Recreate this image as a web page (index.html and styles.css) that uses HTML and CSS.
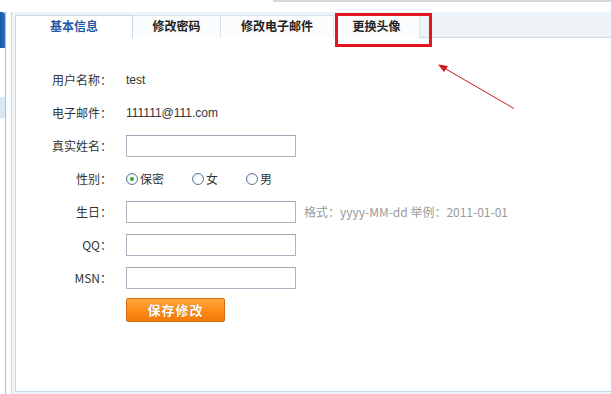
FILE: index.html
```html
<!DOCTYPE html>
<html lang="zh-CN">
<head>
<meta charset="utf-8">
<title>基本信息</title>
<link rel="stylesheet" href="styles.css">
</head>
<body>
<div class="topline"></div>
<div class="wrap">
  <div class="side">
    <div class="side-blue"></div>
    <div class="side-light"></div>
  </div>
  <div class="gapcol"></div>
  <div class="main">
    <div class="panel">
      <div class="tabs">
        <div class="tab active t1">基本信息</div>
        <div class="tab t2">修改密码</div>
        <div class="tab t3">修改电子邮件</div>
        <div class="tab t4">更换头像</div>
      </div>
      <div class="form">
        <div class="row"><span class="label">用户名称：</span><span class="val">test</span></div>
        <div class="row"><span class="label">电子邮件：</span><span class="val">111111@111.com</span></div>
        <div class="row"><span class="label">真实姓名：</span><span class="input"></span></div>
        <div class="row"><span class="label">性别：</span>
          <span class="radios">
            <span class="radio-item r1"><span class="radio on"></span>保密</span>
            <span class="radio-item r2"><span class="radio"></span>女</span>
            <span class="radio-item r3"><span class="radio"></span>男</span>
          </span>
        </div>
        <div class="row"><span class="label">生日：</span><span class="input"></span><span class="hint">格式：yyyy-MM-dd 举例：2011-01-01</span></div>
        <div class="row"><span class="label">QQ：</span><span class="input"></span></div>
        <div class="row"><span class="label">MSN：</span><span class="input"></span></div>
        <div class="btnrow"><span class="btn">保存修改</span></div>
      </div>
    </div>
  </div>
</div>
<div class="redbox"></div>
<svg class="arrow" width="611" height="394" viewBox="0 0 611 394">
  <line x1="514" y1="108.5" x2="445" y2="68.5" stroke="#c81d1d" stroke-width="1"/>
  <polygon points="438,64.5 448,66 444,72" fill="#d01818"/>
</svg>
</body>
</html>
```

FILE: styles.css
```css
html, body {
  margin: 0;
  padding: 0;
  background: #fff;
}
body {
  width: 611px;
  height: 394px;
  overflow: hidden;
  position: relative;
  font-family: "Liberation Sans", "Noto Sans CJK SC", sans-serif;
  font-size: 12px;
  color: #333;
}
.topline {
  height: 2px;
  margin-left: 273px;
  background: #d4d8dc;
  margin-bottom: 10px;
}
.wrap {
  display: flex;
  height: 382px;
}
.side {
  width: 5px;
  border-right: 1px solid #a8c3d8;
  display: flex;
  flex-direction: column;
}
.side-blue {
  height: 36px;
  background: linear-gradient(to right, #1a55a8, #2f70c4);
  border-top-right-radius: 3px;
}
.side-light {
  height: 21px;
  margin-top: 49px;
  background: #d9e6f4;
}
.gapcol {
  width: 5px;
  background: #fbfcfd;
}
.main {
  flex: 1;
  border-left: 1px solid #c9dcec;
  background: #eef3f8;
  padding-left: 3px;
}
.panel {
  height: 379px;
  background: #fff;
  border-left: 1px solid #c6d8e8;
  border-bottom: 1px solid #c6d8e8;
}
.tabs {
  display: flex;
  height: 25px;
  padding-top: 0;
  background: #eef3f8;
  border-bottom: 1px solid #cbdbe8;
  margin-left: -1px;
  align-items: flex-end;
}
.tab {
  height: 22px;
  line-height: 22px;
  text-align: center;
  font-weight: bold;
  font-size: 12px;
  color: #222;
  background: #fbfcfd;
  border-right: 1px solid #d8e3ec;
  border-top: 1px solid #d8e3ec;
  margin-bottom: -1px;
  box-sizing: border-box;
  height: 23px;
}
.tab.active {
  background: #fff;
  color: #2557a7;
  border-left: 1px solid #c6d8e8;
  border-top: 1px solid #c6d8e8;
  border-right: 1px solid #c6d8e8;
}
.t1 { width: 118px; }
.t2 { width: 88px; }
.t3 { width: 113px; }
.t4 { width: 86px; }
.form {
  padding-top: 25px;
}
.row {
  display: flex;
  align-items: center;
  height: 33px;
}
.label {
  width: 96px;
  text-align: right;
  margin-right: 14px;
  font-family: "Noto Sans CJK SC", sans-serif;
  color: #333;
}
.val {
  font-family: "Liberation Sans", "Noto Sans CJK SC", sans-serif;
  color: #333;
}
.input {
  width: 170px;
  height: 22px;
  box-sizing: border-box;
  border: 1px solid #a9b5c1;
  border-top-color: #9aa6b3;
  background: #fff;
}
.hint {
  margin-left: 8px;
  color: #9a9a9a;
  font-family: "Noto Sans CJK SC", sans-serif;
}
.radios {
  display: flex;
  align-items: center;
  font-family: "Noto Sans CJK SC", sans-serif;
}
.radio-item {
  display: flex;
  align-items: center;
}
.r1 { width: 66px; }
.r2 { width: 54px; }
.radio {
  width: 12px;
  height: 12px;
  box-sizing: border-box;
  border: 1px solid #5d7a96;
  border-radius: 50%;
  background: radial-gradient(circle at 60% 60%, #ffffff 30%, #dfe3e8 100%);
  margin-right: 2px;
  position: relative;
}
.radio.on::after {
  content: "";
  position: absolute;
  left: 3px;
  top: 3px;
  width: 4px;
  height: 4px;
  border-radius: 50%;
  background: #2fa52f;
}
.btnrow {
  padding-left: 110px;
  margin-top: 4px;
}
.btn {
  display: inline-block;
  width: 99px;
  height: 24px;
  box-sizing: border-box;
  line-height: 22px;
  text-align: center;
  color: #fff;
  font-weight: bold;
  font-size: 13px;
  font-family: "Noto Sans CJK SC", sans-serif;
  background: linear-gradient(to bottom, #ffa83e 0%, #fb8d1a 50%, #f27a07 100%);
  border: 1px solid #d56c12;
  border-radius: 2px;
  text-shadow: 0 0 1px #c25a00;
  letter-spacing: 1px;
}
.redbox {
  position: absolute;
  left: 335px;
  top: 13px;
  width: 97px;
  height: 34px;
  box-sizing: border-box;
  border: 3px solid #e0161e;
}
.arrow {
  position: absolute;
  left: 0;
  top: 0;
  pointer-events: none;
}
```
